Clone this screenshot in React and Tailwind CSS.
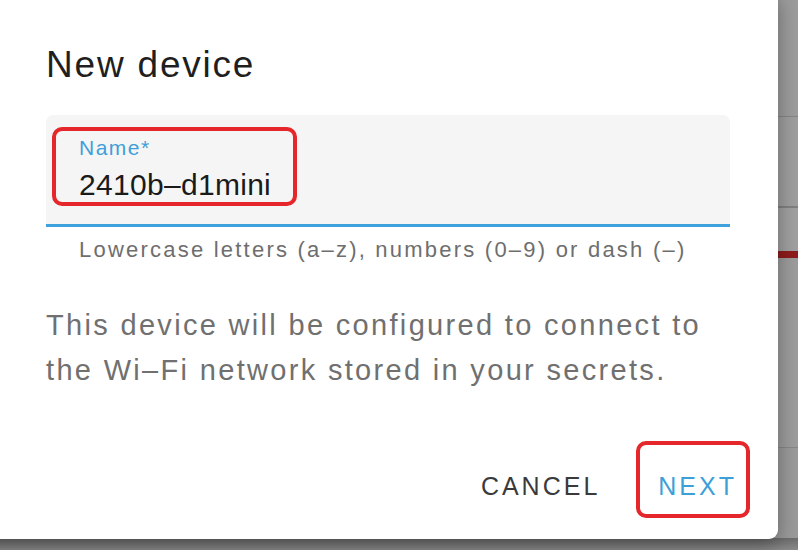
import React from 'react';

const font = { fontFamily: '"Liberation Sans", Arial, sans-serif' };

function Backdrop() {
  return (
    <div className="flex h-full flex-col">
      <div className="h-[116px] bg-[#9c9c9c]" />
      <div className="h-px bg-[#858585]" />
      <div className="h-[89px] bg-[#9e9e9e]" />
      <div className="h-[2px] bg-[#808080]" />
      <div className="h-[43px] bg-[#a0a0a0]" />
      <div className="h-[7px] bg-[#8e1c1c]" />
      <div className="h-[189px] bg-[#9c9c9c]" />
      <div className="h-px bg-[#878787]" />
      <div className="h-[90px] bg-[#9a9a9a]" />
      <div className="flex-1 bg-gradient-to-b from-[#6c6c6c] to-[#8a8a8a]" />
    </div>
  );
}

export default function App() {
  return (
    <div className="relative h-[550px] w-[798px] overflow-hidden bg-[#9c9c9c]" style={font}>
      <Backdrop />

      {/* dialog */}
      <div className="absolute left-[-24px] top-[-8px] h-[547px] w-[802px] rounded-[9px] bg-white pl-[70px] pr-[48px] pt-[51px] shadow-[0_6px_20px_rgba(0,0,0,0.35)]">
        <h2 className="text-[37px] leading-[44px] tracking-[1.8px] text-[#1f1f1f]">New device</h2>

        <div className="relative mt-[28px] rounded-t-[7px] border-b-[3px] border-[#3ea3dc] bg-[#f5f5f5] pb-[21px] pl-[33px] pt-[21px]">
          <div className="text-[21px] leading-[24px] tracking-[1.5px] text-[#3f9fd9]">Name*</div>
          <div className="mt-[7px] text-[30px] leading-[36px] tracking-[0.3px] text-[#1a1a1a]">2410b–d1mini</div>
          <span className="pointer-events-none absolute left-[6px] top-[12px] h-[79px] w-[245px] rounded-[10px] border-[4px] border-[#e5262b]" />
        </div>

        <p className="mt-[10px] pl-[33px] text-[22px] leading-[26px] tracking-[2.22px] text-[#6e6e6e]">
          Lowercase letters (a–z), numbers (0–9) or dash (–)
        </p>

        <p className="mt-[40px] text-[29px] leading-[45px] tracking-[2.32px] text-[#707070]">
          This device will be configured to connect to the Wi–Fi network stored in your secrets.
        </p>

        <div className="mr-[-17px] mt-[78px] flex justify-end gap-[38px]">
          <button className="px-[10px] text-[25px] leading-[30px] tracking-[3px] text-[#3a3a3a]">CANCEL</button>
          <button className="relative px-[10px] text-[25px] leading-[30px] tracking-[3px] text-[#3d9fd8]">
            NEXT
            <span className="pointer-events-none absolute left-[-12px] top-[-30px] h-[77px] w-[114px] rounded-[10px] border-[4px] border-[#e5262b]" />
          </button>
        </div>
      </div>
    </div>
  );
}
